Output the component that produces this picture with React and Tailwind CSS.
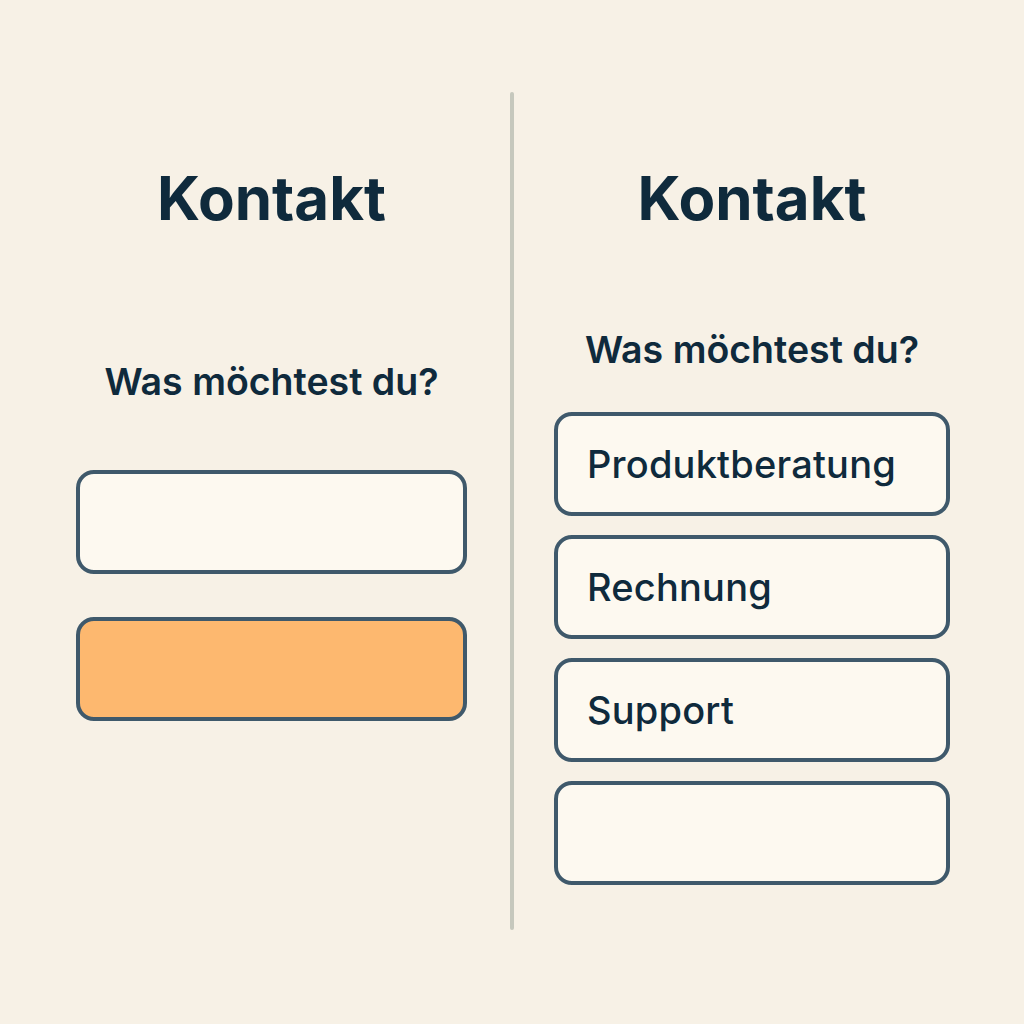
import React from 'react';

const ink = 'text-[#0f2a3c]';

const Box = ({ label, className = 'bg-[#fdf9f0]' }) => (
  <div
    className={`h-[104px] rounded-[18px] border-[4px] border-[#3f596b] flex items-center px-[29px] ${className}`}
  >
    {label && <span className={`text-[38px] font-medium tracking-[0.2px] ${ink}`}>{label}</span>}
  </div>
);

export default function App() {
  return (
    <div
      className="w-[1024px] h-[1024px] bg-[#f7f1e6] flex"
      style={{ fontFamily: 'Inter, "Noto Sans", sans-serif' }}
    >
      {/* left: collapsed state */}
      <div className="w-[391px] ml-[76px] flex flex-col items-stretch pt-[160px]">
        <h1 className={`text-[60px] font-bold text-center leading-[76px] ${ink}`}>Kontakt</h1>
        <p className={`mt-[124px] text-[37.5px] font-semibold text-center leading-[44px] ${ink}`}>
          Was möchtest du?
        </p>
        <div className="mt-[66px] flex flex-col gap-[43px]">
          <Box />
          <Box className="bg-[#fdb86f]" />
        </div>
      </div>

      {/* divider */}
      <div className="ml-[43px] mt-[92px] w-[4px] h-[838px] rounded-full bg-[#c6c8bd]" />

      {/* right: expanded options */}
      <div className="w-[396px] ml-[40px] flex flex-col items-stretch pt-[160px]">
        <h1 className={`text-[60px] font-bold text-center leading-[76px] ${ink}`}>Kontakt</h1>
        <p className={`mt-[92px] text-[37.5px] font-semibold text-center leading-[44px] ${ink}`}>
          Was möchtest du?
        </p>
        <div className="mt-[40px] flex flex-col gap-[19px]">
          <Box label="Produktberatung" />
          <Box label="Rechnung" />
          <Box label="Support" />
          <Box />
        </div>
      </div>
    </div>
  );
}
